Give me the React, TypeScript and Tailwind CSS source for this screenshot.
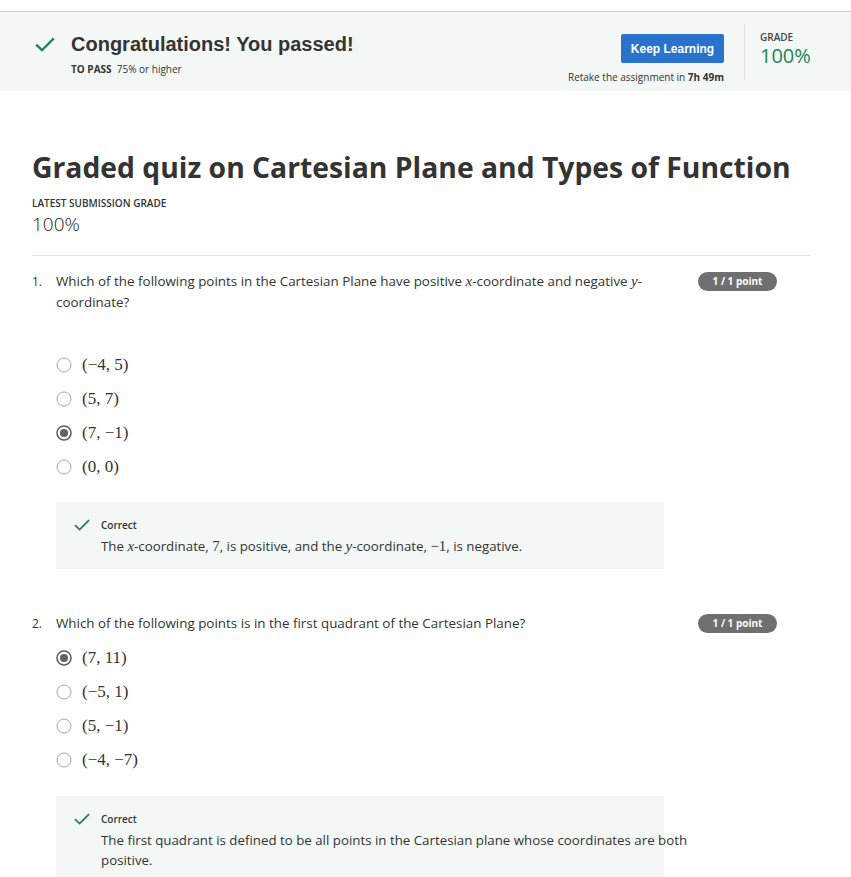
import React from "react";

const Check = ({ w, h }: { w: number; h: number }) => (
  <svg width={w} height={h} viewBox="0 0 20 15" className="shrink-0">
    <path d="M1.2 7.6 L7 13.2 L18.8 1.4" fill="none" stroke="#1f8354" strokeWidth="2.3" />
  </svg>
);

const Radio = ({ checked }: { checked?: boolean }) => (
  <svg width="16" height="16" viewBox="0 0 16 16" className="shrink-0">
    {checked ? (
      <>
        <circle cx="8" cy="8" r="7" fill="white" stroke="#5f5f5f" strokeWidth="1.6" />
        <circle cx="8" cy="8" r="4" fill="#616161" />
      </>
    ) : (
      <circle cx="8" cy="8" r="7" fill="white" stroke="#a8a8a8" strokeWidth="1" />
    )}
  </svg>
);

const M = ({ children, i }: { children: React.ReactNode; i?: boolean }) => (
  <span
    className={i ? "italic text-[1.12em] leading-none" : "text-[1.12em] leading-none"}
    style={{ fontFamily: '"Liberation Serif", "DejaVu Serif", serif' }}
  >
    {children}
  </span>
);

const Option = ({ label, checked }: { label: string; checked?: boolean }) => (
  <div className="flex items-center h-[34px]">
    <Radio checked={checked} />
    <span
      className="ml-[10px] text-[17px] text-[#333]"
      style={{ fontFamily: '"Liberation Serif", "DejaVu Serif", serif' }}
    >
      {label}
    </span>
  </div>
);

const Badge = () => (
  <div className="w-[79px] h-[19px] rounded-full bg-[#6f6f6f] text-white text-[10px] font-bold flex items-center justify-center">
    1 / 1 point
  </div>
);

export default function App() {
  return (
    <div
      className="w-[851px] h-[877px] overflow-hidden bg-white text-[#333]"
      style={{ fontFamily: '"Open Sans", sans-serif' }}
    >
      <div className="h-[11px]" />
      <div className="border-t border-[#cdcdcd] bg-[#f3f8f6] h-[80px] flex">
        <div className="flex-1 flex pl-[35px] pt-[20px]">
          <div className="mt-[5px]">
            <Check w={20} h={15} />
          </div>
          <div className="ml-[16px]">
            <div
              className="text-[20px] leading-[24px] font-bold text-[#333]"
              style={{ fontFamily: '"Liberation Sans", Arial, sans-serif' }}
            >
              Congratulations! You passed!
            </div>
            <div className="mt-[6px] text-[10px] leading-[14px] text-[#333]">
              <span className="font-bold">TO PASS</span>&nbsp; 75% or higher
            </div>
          </div>
        </div>
        <div className="flex flex-col items-end pt-[22px]">
          <div
            className="w-[103px] h-[29px] rounded-[2px] bg-[#2a73cc] text-white text-[12px] font-bold flex items-center justify-center"
            style={{ fontFamily: '"Liberation Sans", Arial, sans-serif' }}
          >
            Keep Learning
          </div>
          <div className="mt-[7px] text-[10px] leading-[14px] text-[#333]">
            Retake the assignment in <span className="font-bold">7h 49m</span>
          </div>
        </div>
        <div className="ml-[20px] mt-[12px] h-[56px] border-l border-[#dedede]" />
        <div className="w-[106px] pl-[15px] pt-[18px]">
          <div className="text-[10px] leading-[14px] font-semibold text-[#444]">GRADE</div>
          <div className="text-[20px] leading-[24px] text-[#1f8354]">100%</div>
        </div>
      </div>

      <div className="pl-[32px] pr-[41px]">
        <h1 className="mt-[56px] text-[28.3px] leading-[40px] font-bold text-[#333]">
          Graded quiz on Cartesian Plane and Types of Function
        </h1>
        <div className="mt-[9px] text-[10px] leading-[14px] font-semibold text-[#333]">
          LATEST SUBMISSION GRADE
        </div>
        <div className="mt-[2px] text-[19px] leading-[24px] font-light text-[#222]">100%</div>
        <div className="mt-[19px] border-t border-[#e3e3e3]" />

        {/* Question 1 */}
        <div className="mt-[15px] flex">
          <div className="w-[24px] text-[12px] leading-[21px]">1.</div>
          <div className="flex-1">
            <div className="flex justify-between">
              <div className="w-[620px] text-[13.4px] leading-[21px] text-[#333]">
                Which of the following points in the Cartesian Plane have positive <M i>x</M>-coordinate and negative <M i>y</M>-coordinate?
              </div>
              <div className="mt-[1px] mr-[33px]">
                <Badge />
              </div>
            </div>
            <div className="mt-[35px]">
              <Option label="(−4, 5)" />
              <Option label="(5, 7)" />
              <Option label="(7, −1)" checked />
              <Option label="(0, 0)" />
            </div>
            <div className="mt-[18px] w-[608px] h-[67px] bg-[#f3f8f6] pl-[18px] pt-[16px]">
              <div className="flex items-center">
                <Check w={16} h={12} />
                <span className="ml-[11px] text-[10px] leading-[14px] font-semibold text-[#333]">Correct</span>
              </div>
              <div className="ml-[27px] mt-[4px] text-[13.3px] leading-[20px] text-[#333]">
                The <M i>x</M>-coordinate, <M>7</M>, is positive, and the <M i>y</M>-coordinate, <M>−1</M>, is negative.
              </div>
            </div>
          </div>
        </div>

        {/* Question 2 */}
        <div className="mt-[44px] flex">
          <div className="w-[24px] text-[12px] leading-[21px]">2.</div>
          <div className="flex-1">
            <div className="flex justify-between">
              <div className="w-[620px] text-[13.4px] leading-[21px] text-[#333]">
                Which of the following points is in the first quadrant of the Cartesian Plane?
              </div>
              <div className="mt-[1px] mr-[33px]">
                <Badge />
              </div>
            </div>
            <div className="mt-[7px]">
              <Option label="(7, 11)" checked />
              <Option label="(−5, 1)" />
              <Option label="(5, −1)" />
              <Option label="(−4, −7)" />
            </div>
            <div className="mt-[19px] w-[608px] h-[90px] bg-[#f3f8f6] pl-[18px] pt-[16px]">
              <div className="flex items-center">
                <Check w={16} h={12} />
                <span className="ml-[11px] text-[10px] leading-[14px] font-semibold text-[#333]">Correct</span>
              </div>
              <div className="ml-[27px] mt-[4px] w-[600px] text-[13.3px] leading-[20px] text-[#333]">
                The first quadrant is defined to be all points in the Cartesian plane whose coordinates are both positive.
              </div>
            </div>
          </div>
        </div>
      </div>
    </div>
  );
}
